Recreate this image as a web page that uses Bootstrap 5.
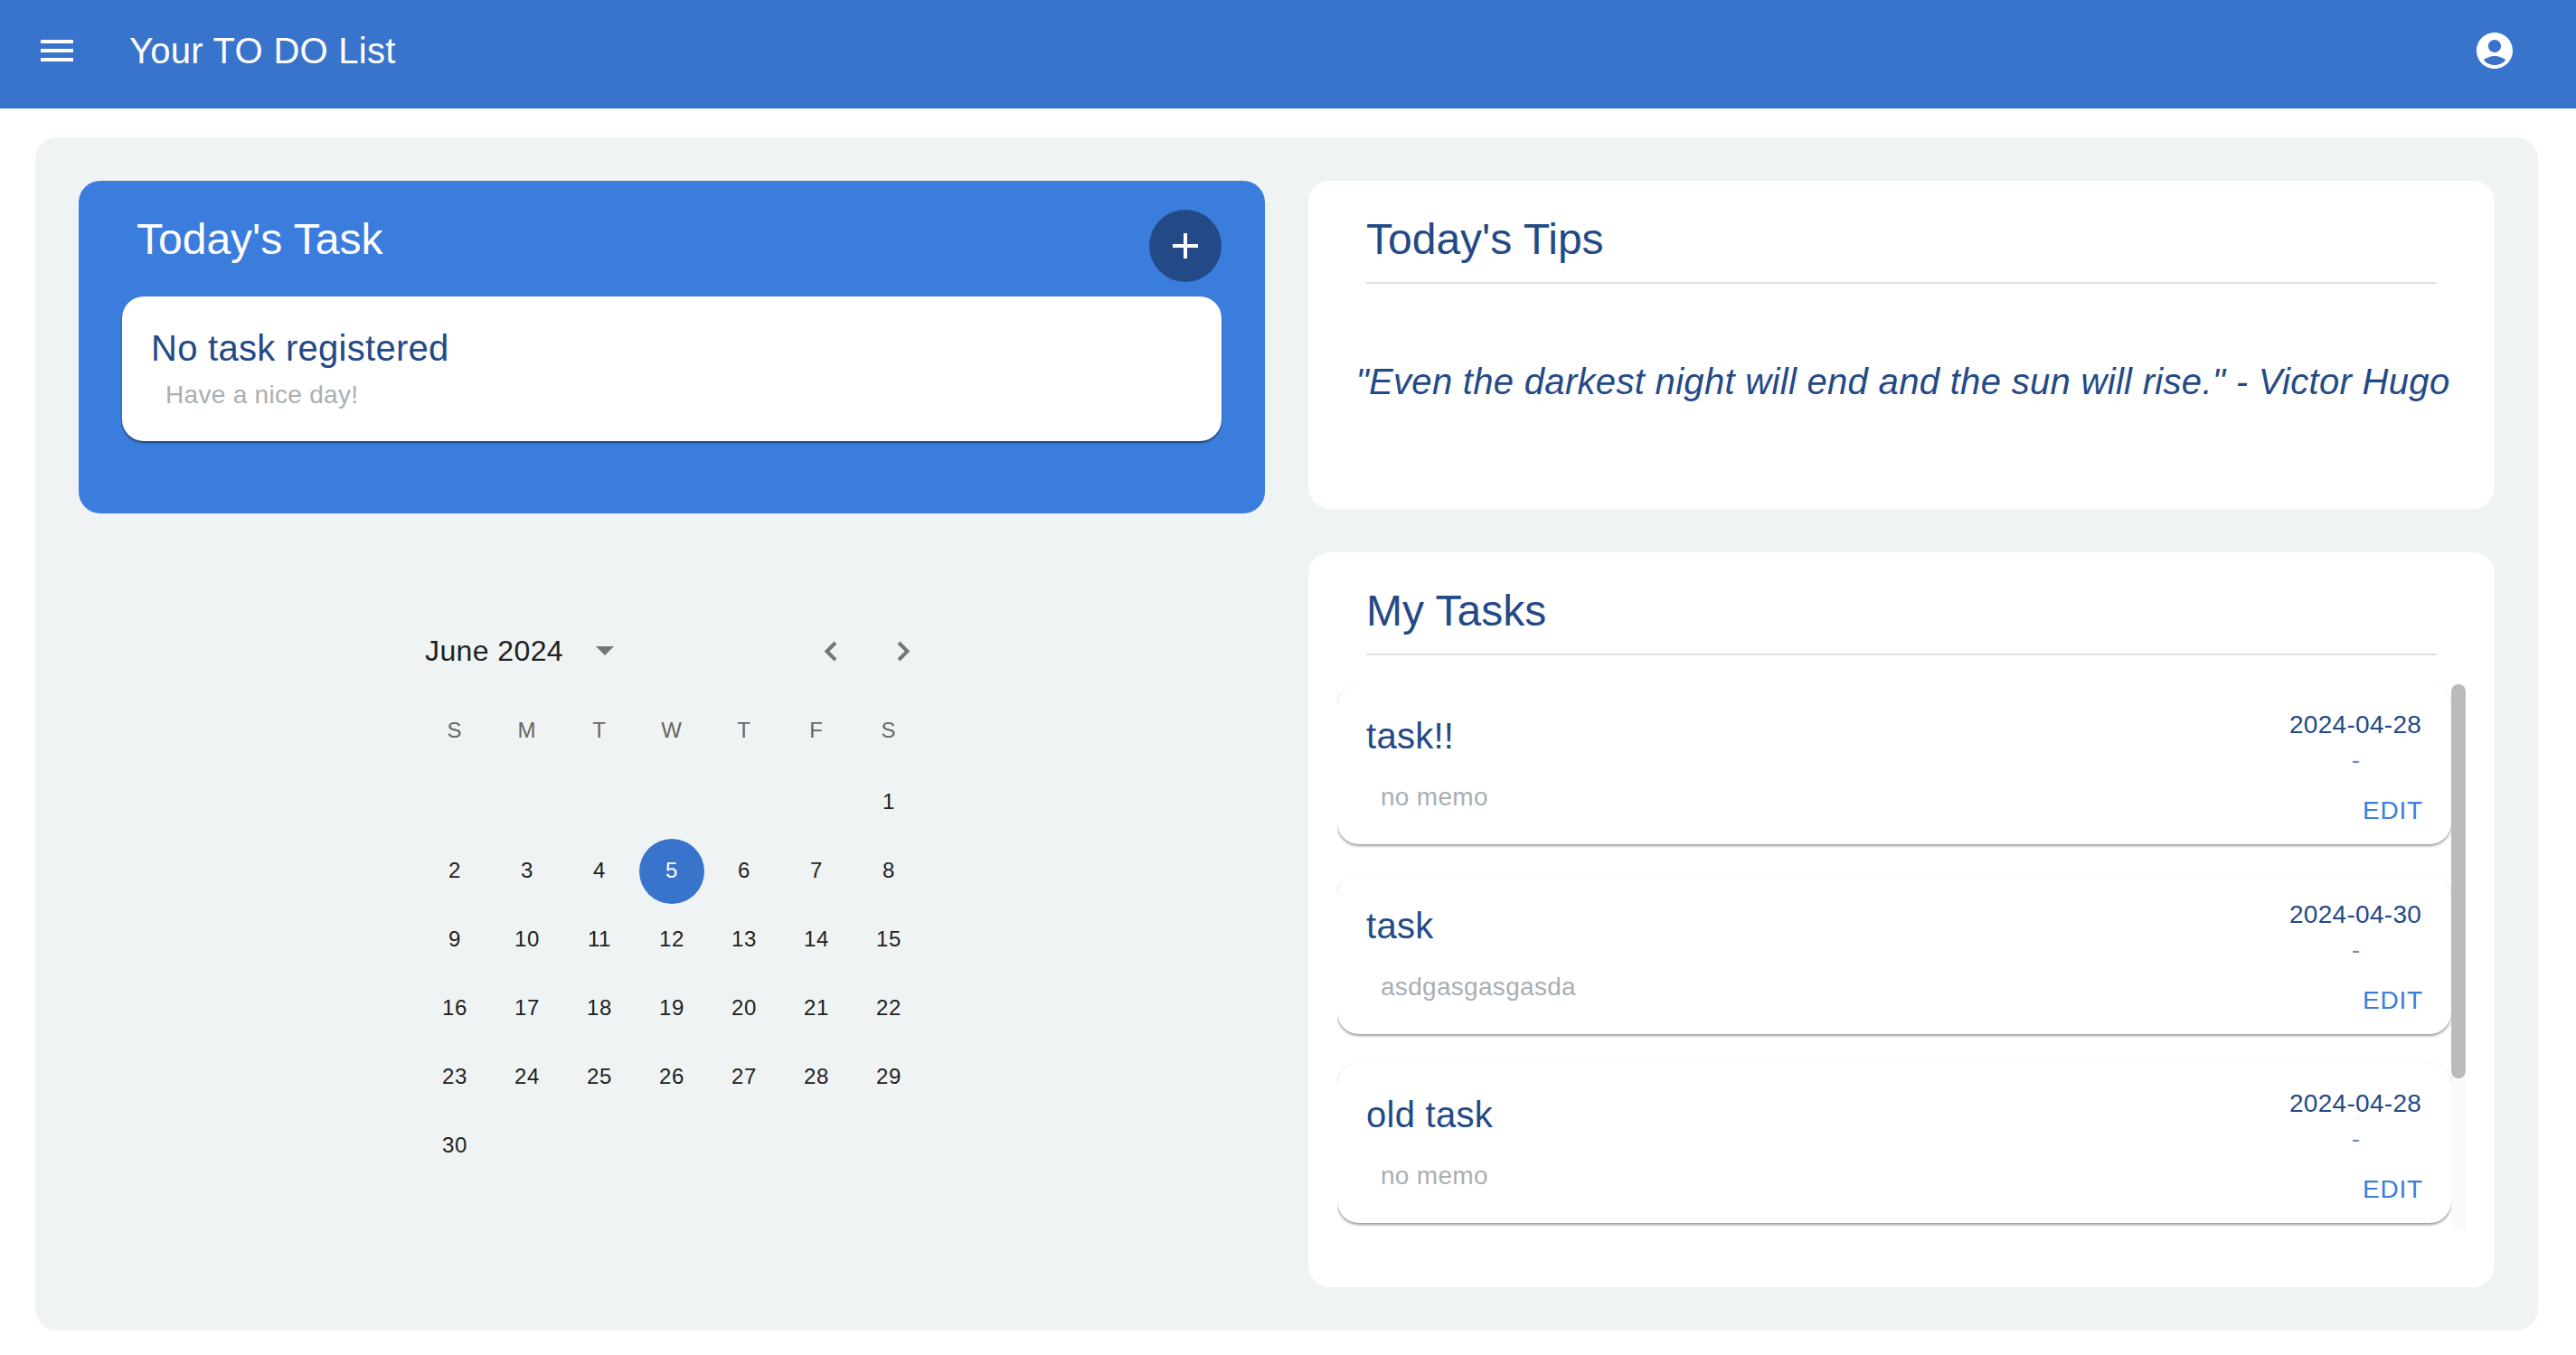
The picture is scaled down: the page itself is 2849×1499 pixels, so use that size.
<!DOCTYPE html>
<html lang="en">
<head>
<meta charset="utf-8">
<title>Your TO DO List</title>
<link href="https://cdn.jsdelivr.net/npm/bootstrap@5.3.0/dist/css/bootstrap.min.css" rel="stylesheet">
<style>
html, body { height: 100%; }
body { font-family: "Liberation Sans", Arial, sans-serif; background: #fff; overflow: hidden; color: #234a87; }
.top-bar { height: 120px; padding: 32px 66px 40px 39px; background: #3974cc; color: #fff; }
.top-bar svg { width: 48px; height: 48px; fill: #fff; display: block; }
.top-title { font-size: 40px; line-height: 48px; margin: 0 0 0 56px; font-weight: 400; letter-spacing: .28px; }
.board { margin: 32px 42px 0 39px; height: 1320px; padding: 48px; background: #f0f3f4; border-radius: 24px; }
.board > .row { --bs-gutter-x: 48px; --bs-gutter-y: 0; height: 100%; }
.sheet { border: 0; border-radius: 24px; background: #fff; color: #234a87; }
.today-sheet { height: 368px; background: #3b7ddd; padding: 32px 48px 0; }
.sheet-title { font-size: 48px; line-height: 56px; font-weight: 400; margin: 5px 0 0; }
.today-sheet .sheet-title { color: #fff; margin-left: 16px; }
.add-btn { width: 80px; height: 80px; border-radius: 50%; background: #234a87; border: 0; padding: 0; }
.add-btn svg { width: 48px; height: 48px; fill: #fff; }
.today-head { height: 96px; }
.empty-task { height: 160px; border: 0; border-radius: 24px; padding: 33px 32px 0; background: #fff; color: #234a87; box-shadow: 0 2px 2px rgba(20,40,80,.7); }
.task-name { font-size: 40px; line-height: 48px; margin: 0; font-weight: 400; letter-spacing: .28px; }
.task-note { font-size: 28px; line-height: 36px; color: #a9afb2; margin: 0; padding-left: 16px; letter-spacing: .3px; }
.empty-task .task-note { margin-top: 10px; }
.tip-sheet { height: 363px; padding: 32px 64px 0; }
.rule-line { height: 2px; margin: 0; background: #e0e0e0; border: 0; opacity: 1; }
.tip-sheet .rule-line { margin-top: 19px; }
.tip-text { font-size: 40px; line-height: 48px; font-style: italic; margin: 84px -23px 0 -20px; text-align: center; white-space: nowrap; letter-spacing: .31px; }
.list-sheet { height: 813px; margin-top: 48px; padding: 32px 32px 0; }
.list-head { padding: 0 32px; }
.list-head .rule-line { margin-top: 19px; }
.task-scroll { height: 604px; margin-top: 32px; overflow: hidden; padding-right: 16px; }
.scroll-track { top: 0; right: 0; width: 16px; height: 100%; background: #fafafa; }
.scroll-thumb { width: 16px; height: 436px; background: #bbb; border-radius: 8px; }
.task-item { height: 177px; margin-bottom: 32.5px; border: 0; border-radius: 24px; padding: 0 32px; background: #fff; box-shadow: 0 2px 3px rgba(0,0,0,.4), 0 0 1px rgba(0,0,0,.05); }
.task-left { padding-top: 33px; }
.task-left .task-note { margin-top: 26px; }
.task-right { padding-top: 27px; font-size: 28px; line-height: 36px; width: 147px; }
.task-date { letter-spacing: .3px; white-space: nowrap; }
.task-dash { margin-top: 3px; text-align: center; color: #6f8db8; }
.task-edit { display: block; margin-top: 20px; padding: 0; border: 0; background: none; color: #3b7ddd; font-size: 28px; line-height: 36px; text-align: right; width: calc(100% + 1px); letter-spacing: .8px; white-space: nowrap; }
.calendar-box { width: 640px; margin: 112px auto 0; padding: 0 40px; color: #212121; }
.cal-head { height: 80px; padding: 0 8px 0 7px; }
.cal-month { font-size: 32px; line-height: 40px; letter-spacing: .4px; }
.cal-caret { width: 20px; height: 10px; margin-left: 36px; fill: #757575; display: block; }
.cal-arrows { gap: 66px; margin-right: 8px; }
.cal-arrows svg { width: 15px; height: 23px; display: block; fill: none; stroke: #757575; stroke-width: 4; }
.cal-grid { display: grid; grid-template-columns: repeat(7, 80px); }
.week-grid { margin-top: 28px; margin-bottom: 22px; color: #666; font-size: 24px; line-height: 40px; text-align: center; letter-spacing: .8px; }
.day-grid { font-size: 24px; letter-spacing: .6px; grid-auto-rows: 76px; }
.day-cell { display: flex; align-items: center; justify-content: center; }
.day-cell span { width: 72px; height: 72px; line-height: 69px; text-align: center; border-radius: 50%; }
.day-cell .day-on { background: #3974cc; color: #fff; }
.first-day { grid-column-start: 7; }
</style>
</head>
<body>
<nav class="top-bar d-flex align-items-center">
  <svg viewBox="0 0 24 24" aria-hidden="true"><path d="M3 18h18v-2H3zm0-5h18v-2H3zm0-7v2h18V6z"/></svg>
  <h1 class="top-title flex-grow-1">Your TO DO List</h1>
  <svg viewBox="0 0 24 24" aria-hidden="true"><path d="M12 2C6.48 2 2 6.48 2 12s4.48 10 10 10 10-4.48 10-10S17.52 2 12 2zm0 4c1.93 0 3.5 1.57 3.5 3.5S13.93 13 12 13s-3.5-1.57-3.5-3.5S10.07 6 12 6zm0 14c-2.03 0-4.43-.82-6.14-2.88C7.55 15.8 9.68 15 12 15s4.45.8 6.14 2.12C16.43 19.18 14.03 20 12 20z"/></svg>
</nav>
<main class="board">
  <div class="row">
    <div class="col-6">
      <section class="card sheet today-sheet">
        <div class="today-head d-flex justify-content-between align-items-start">
          <h2 class="sheet-title">Today's Task</h2>
          <button class="btn add-btn d-flex align-items-center justify-content-center" type="button" aria-label="Add">
            <svg viewBox="0 0 24 24" aria-hidden="true"><path d="M19 13h-6v6h-2v-6H5v-2h6V5h2v6h6v2z"/></svg>
          </button>
        </div>
        <div class="card empty-task">
          <p class="task-name">No task registered</p>
          <p class="task-note">Have a nice day!</p>
        </div>
      </section>
      <section class="calendar-box">
        <div class="cal-head d-flex align-items-center justify-content-between">
          <div class="d-flex align-items-center">
            <span class="cal-month">June 2024</span>
            <svg class="cal-caret" viewBox="0 0 20 10" aria-hidden="true"><path d="M0 0h20L10 10z"/></svg>
          </div>
          <div class="cal-arrows d-flex align-items-center">
            <svg viewBox="0 0 15 23" aria-hidden="true"><path d="M13 2 3.5 11.5 13 21"/></svg>
            <svg viewBox="0 0 15 23" aria-hidden="true"><path d="M2 2l9.500 9.500L2 21"/></svg>
          </div>
        </div>
        <div class="cal-grid week-grid">
          <div>S</div><div>M</div><div>T</div><div>W</div><div>T</div><div>F</div><div>S</div>
        </div>
        <div class="cal-grid day-grid">
          <div class="day-cell first-day"><span>1</span></div>
          <div class="day-cell"><span>2</span></div><div class="day-cell"><span>3</span></div><div class="day-cell"><span>4</span></div><div class="day-cell"><span class="day-on">5</span></div><div class="day-cell"><span>6</span></div><div class="day-cell"><span>7</span></div><div class="day-cell"><span>8</span></div>
          <div class="day-cell"><span>9</span></div><div class="day-cell"><span>10</span></div><div class="day-cell"><span>11</span></div><div class="day-cell"><span>12</span></div><div class="day-cell"><span>13</span></div><div class="day-cell"><span>14</span></div><div class="day-cell"><span>15</span></div>
          <div class="day-cell"><span>16</span></div><div class="day-cell"><span>17</span></div><div class="day-cell"><span>18</span></div><div class="day-cell"><span>19</span></div><div class="day-cell"><span>20</span></div><div class="day-cell"><span>21</span></div><div class="day-cell"><span>22</span></div>
          <div class="day-cell"><span>23</span></div><div class="day-cell"><span>24</span></div><div class="day-cell"><span>25</span></div><div class="day-cell"><span>26</span></div><div class="day-cell"><span>27</span></div><div class="day-cell"><span>28</span></div><div class="day-cell"><span>29</span></div>
          <div class="day-cell"><span>30</span></div>
        </div>
      </section>
    </div>
    <div class="col-6">
      <section class="card sheet tip-sheet">
        <h2 class="sheet-title">Today's Tips</h2>
        <hr class="rule-line">
        <p class="tip-text">"Even the darkest night will end and the sun will rise." - Victor Hugo</p>
      </section>
      <section class="card sheet list-sheet">
        <div class="list-head">
          <h2 class="sheet-title">My Tasks</h2>
          <hr class="rule-line">
        </div>
        <div class="task-scroll position-relative">
          <article class="card task-item flex-row justify-content-between">
            <div class="task-left"><p class="task-name">task!!</p><p class="task-note">no memo</p></div>
            <div class="task-right"><div class="task-date">2024-04-28</div><div class="task-dash">-</div><button class="task-edit" type="button">EDIT</button></div>
          </article>
          <article class="card task-item flex-row justify-content-between">
            <div class="task-left"><p class="task-name">task</p><p class="task-note">asdgasgasgasda</p></div>
            <div class="task-right"><div class="task-date">2024-04-30</div><div class="task-dash">-</div><button class="task-edit" type="button">EDIT</button></div>
          </article>
          <article class="card task-item flex-row justify-content-between">
            <div class="task-left"><p class="task-name">old task</p><p class="task-note">no memo</p></div>
            <div class="task-right"><div class="task-date">2024-04-28</div><div class="task-dash">-</div><button class="task-edit" type="button">EDIT</button></div>
          </article>
          <div class="scroll-track position-absolute"><div class="scroll-thumb"></div></div>
        </div>
      </section>
    </div>
  </div>
</main>
<script src="https://cdn.jsdelivr.net/npm/bootstrap@5.3.0/dist/js/bootstrap.bundle.min.js"></script>
</body>
</html>
